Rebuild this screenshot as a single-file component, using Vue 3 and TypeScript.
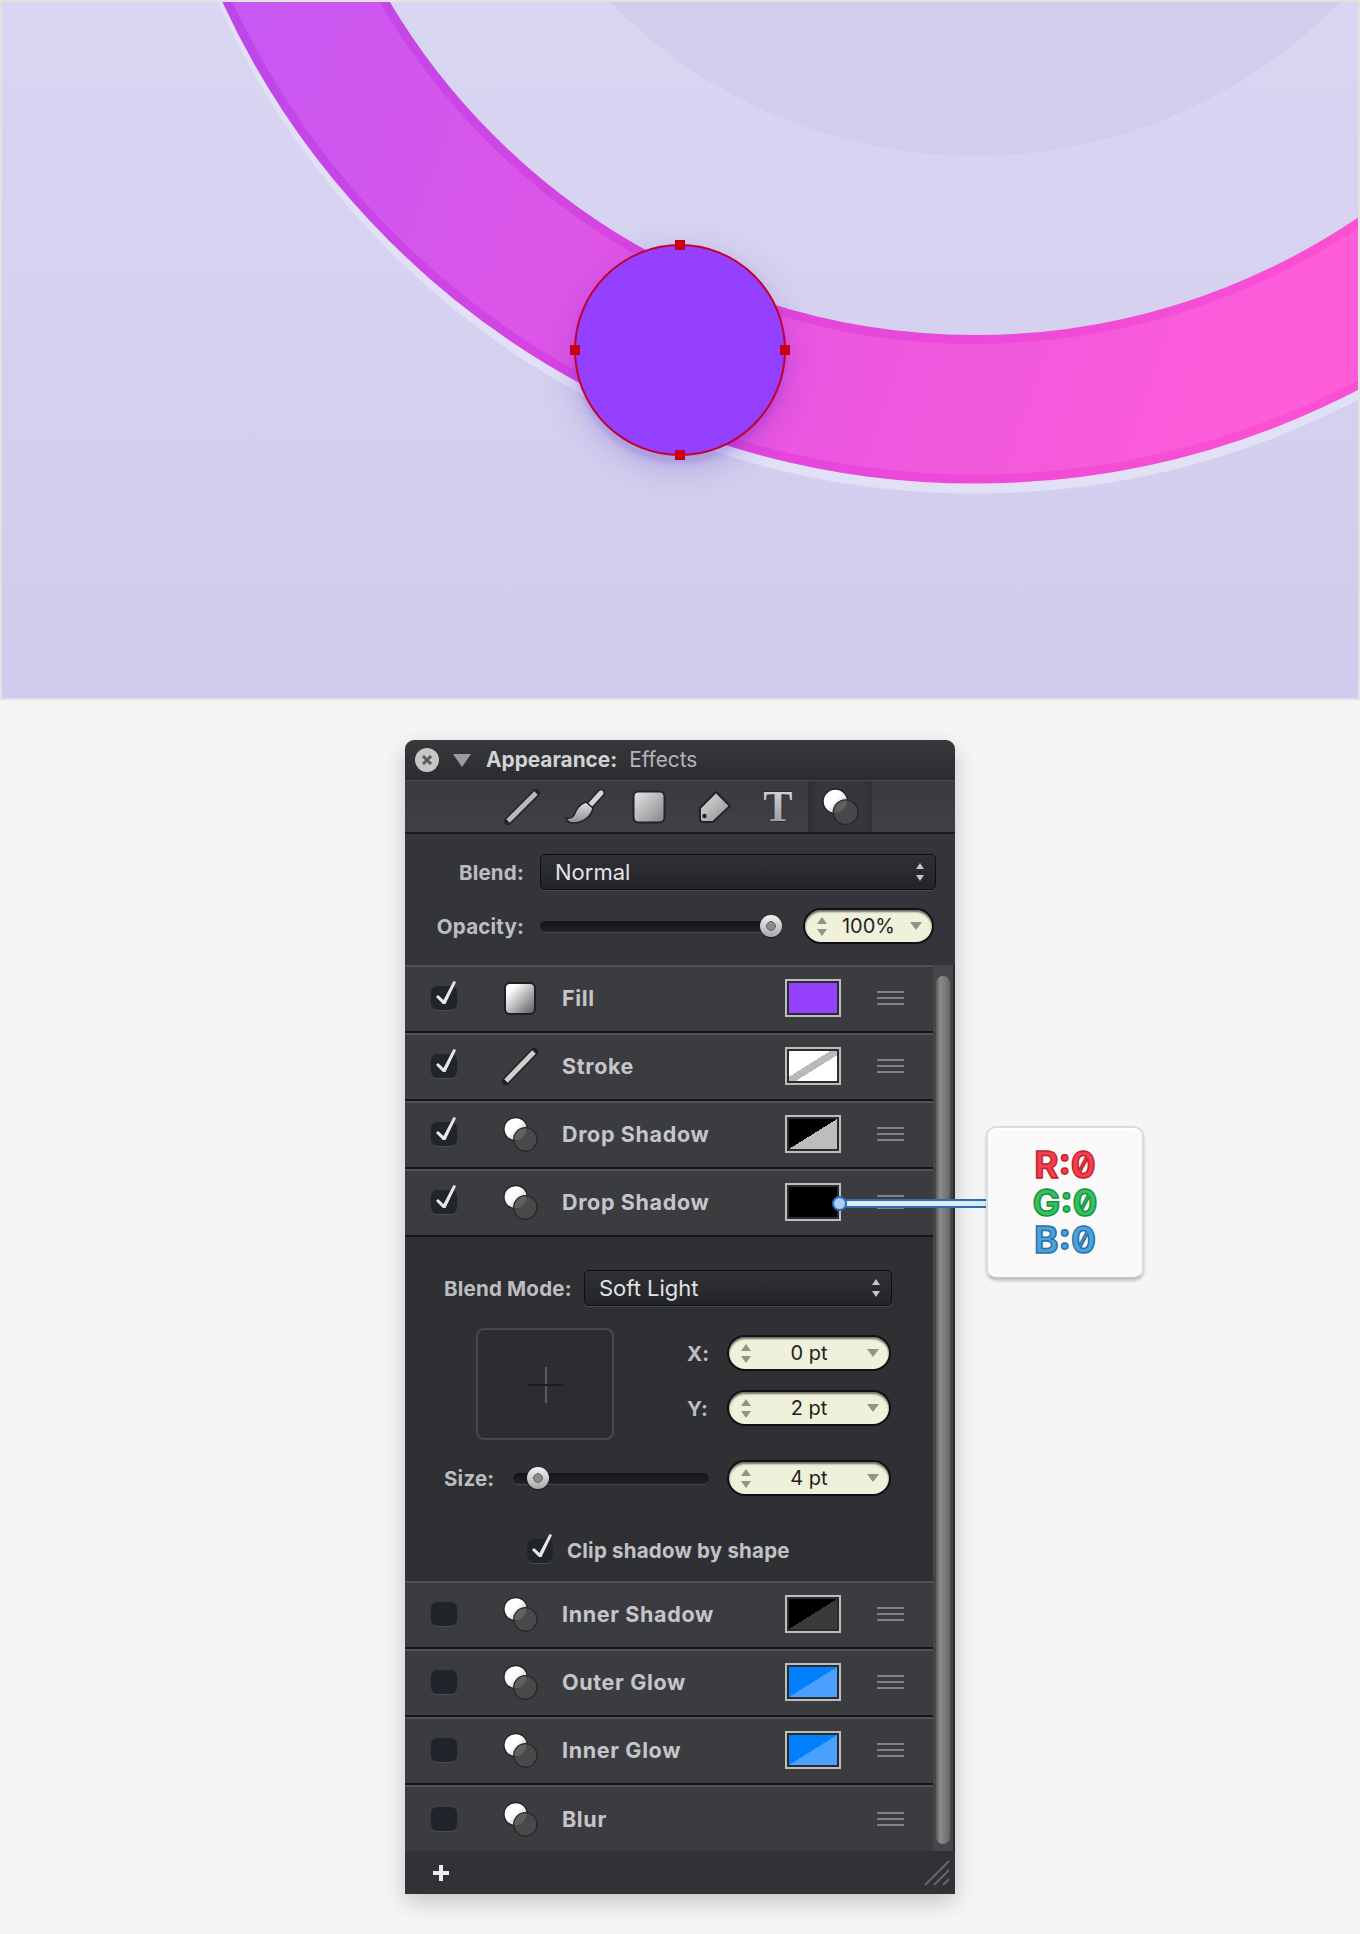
<script setup lang="ts">
interface EffectRow {
  name: string
  checked: boolean
  icon: 'fill' | 'line' | 'fx'
  swatch?: string
  expanded?: boolean
}

const rows: EffectRow[] = [
  { name: 'Fill', checked: true, icon: 'fill', swatch: 'sw-purple' },
  { name: 'Stroke', checked: true, icon: 'line', swatch: 'sw-stroke' },
  { name: 'Drop Shadow', checked: true, icon: 'fx', swatch: 'sw-gray' },
  { name: 'Drop Shadow', checked: true, icon: 'fx', swatch: 'sw-black', expanded: true },
  { name: 'Inner Shadow', checked: false, icon: 'fx', swatch: 'sw-dark' },
  { name: 'Outer Glow', checked: false, icon: 'fx', swatch: 'sw-blue' },
  { name: 'Inner Glow', checked: false, icon: 'fx', swatch: 'sw-blue' },
  { name: 'Blur', checked: false, icon: 'fx' }
]

const handles = [
  { x: 680, y: 245 },
  { x: 575, y: 350 },
  { x: 785, y: 350 },
  { x: 680, y: 455 }
]
</script>

<template>
  <div class="page">
    <!-- gradients shared by the small icons -->
    <svg class="defs" width="0" height="0">
      <defs>
        <linearGradient id="tool" x1="0" y1="0" x2="1" y2="1">
          <stop offset="0" stop-color="#e6e6e6" />
          <stop offset="1" stop-color="#85868a" />
        </linearGradient>
        <linearGradient id="toolV" x1="0" y1="0" x2="0" y2="1">
          <stop offset="0" stop-color="#e2e2e2" />
          <stop offset="1" stop-color="#8c8d90" />
        </linearGradient>
        <linearGradient id="ball" x1="0" y1="0" x2="1" y2="1">
          <stop offset="0.45" stop-color="#ffffff" />
          <stop offset="1" stop-color="#a0a0a0" />
        </linearGradient>
        <linearGradient id="box" x1="0" y1="0" x2="1" y2="1">
          <stop offset="0.2" stop-color="#ffffff" />
          <stop offset="1" stop-color="#55565a" />
        </linearGradient>
      </defs>
    </svg>

    <div class="canvas">
      <svg class="art" width="1356" height="696" viewBox="2 2 1356 696">
        <defs>
          <linearGradient id="ringDark" gradientUnits="userSpaceOnUse" x1="230" y1="0" x2="1300" y2="380">
            <stop offset="0" stop-color="#bc46ea" />
            <stop offset="0.5" stop-color="#df44de" />
            <stop offset="1" stop-color="#fb50d3" />
          </linearGradient>
          <linearGradient id="ringLight" gradientUnits="userSpaceOnUse" x1="230" y1="0" x2="1300" y2="380">
            <stop offset="0" stop-color="#c658f3" />
            <stop offset="0.5" stop-color="#e655e2" />
            <stop offset="1" stop-color="#ff5dd8" />
          </linearGradient>
        </defs>
        <circle cx="975" cy="-354" r="510" fill="#d2cdea" />
        <circle cx="975.4" cy="-336" r="755.25" fill="none" stroke="#e2e0f6" stroke-width="148.5" />
        <circle cx="975.4" cy="-346" r="755.25" fill="none" stroke="url(#ringDark)" stroke-width="148.5" />
        <circle cx="975.4" cy="-346" r="755.25" fill="none" stroke="url(#ringLight)" stroke-width="130.5" />
        <circle class="dot" cx="680" cy="350" r="105" fill="#9640ff" stroke="#c4002c" stroke-width="2" />
        <rect v-for="h in handles" :key="h.x + '-' + h.y" :x="h.x - 5" :y="h.y - 5" width="10" height="10" fill="#c90012" />
      </svg>
    </div>

    <div class="panel">
      <div class="titlebar">
        <span class="close">
          <svg width="12" height="12" viewBox="0 0 12 12">
            <path d="M2 2l8 8M10 2l-8 8" stroke="#5c5c5c" stroke-width="3" fill="none" />
          </svg>
        </span>
        <span class="disclosure"></span>
        <span class="title-strong">Appearance:</span>
        <span class="title-light">Effects</span>
      </div>

      <div class="toolbar">
        <svg class="tool tool-line" width="34" height="34" viewBox="0 0 34 34">
          <path d="M3 31L31 3" stroke="#222327" stroke-width="8" stroke-linecap="round" />
          <path d="M3 31L31 3" stroke="#b9b9bb" stroke-width="5" />
        </svg>
        <svg class="tool tool-brush" width="38" height="34" viewBox="0 0 38 34">
          <path d="M35 3L25 14" stroke="#222327" stroke-width="8" stroke-linecap="round" />
          <path d="M35 3L25 14" stroke="#d5d5d5" stroke-width="5" stroke-linecap="round" />
          <path d="M20 12l7 6c-2 9-10 15-20 15-3 0-6-2-7-5 5 1 8-2 9-5 2-6 6-9 11-11z" fill="url(#toolV)" stroke="#222327" stroke-width="1.6" />
        </svg>
        <svg class="tool tool-square" width="34" height="34" viewBox="0 0 34 34">
          <rect x="1.5" y="1.5" width="31" height="31" rx="5" fill="url(#tool)" stroke="#222327" stroke-width="2" />
        </svg>
        <svg class="tool tool-tag" width="34" height="34" viewBox="0 0 34 34">
          <path d="M18 2L32 16L15 32H5Q2 32 2 29V18Z" fill="url(#tool)" stroke="#222327" stroke-width="2" stroke-linejoin="round" />
          <circle cx="6.5" cy="26" r="2.2" fill="#222327" />
        </svg>
        <svg class="tool tool-t" width="32" height="34" viewBox="0 0 32 34">
          <text class="t-glyph" x="16" y="31" text-anchor="middle" fill="url(#toolV)" stroke="#222327" stroke-width="1.2">T</text>
        </svg>
        <div class="tool-active">
          <svg width="37" height="37" viewBox="0 0 36 36">
            <circle cx="13" cy="13" r="12" fill="url(#ball)" stroke="#222327" stroke-width="1.4" />
            <circle cx="23" cy="23.5" r="12" fill="#4c4c4c" fill-opacity="0.86" stroke="#26262a" stroke-width="1.3" />
          </svg>
        </div>
      </div>

      <div class="blend">
        <div class="blend-row">
          <span class="label blend-label">Blend:</span>
          <div class="select select-wide">
            <span>Normal</span>
            <span class="updown"><i class="up"></i><i class="down"></i></span>
          </div>
        </div>
        <div class="blend-row">
          <span class="label blend-label">Opacity:</span>
          <div class="slider slider-opacity"><span class="knob knob-end"></span></div>
          <div class="pill pill-pct">
            <span class="steps"><i class="up"></i><i class="down"></i></span>
            <span class="pill-value">100%</span>
            <span class="menu"><i class="down"></i></span>
          </div>
        </div>
      </div>

      <div class="body">
        <div class="list">
          <template v-for="(row, i) in rows" :key="i">
            <div class="row">
              <span class="check">
                <svg v-if="row.checked" class="tick" width="26" height="24" viewBox="0 0 26 24">
                  <polygon points="5,11 7,9 12.5,14 22.5,-5 25,-4 14.5,18 12,18" fill="#e8e8e8" />
                </svg>
              </span>
              <svg v-if="row.icon === 'fill'" class="row-icon" width="35" height="36" viewBox="0 0 35 36">
                <rect x="2" y="3" width="30" height="31" rx="5" fill="url(#box)" stroke="#1e1f22" stroke-width="2" />
              </svg>
              <svg v-else-if="row.icon === 'line'" class="row-icon" width="35" height="36" viewBox="0 0 35 36">
                <path d="M3 33L31 4" stroke="#1e1f22" stroke-width="8" stroke-linecap="round" />
                <path d="M3 33L31 4" stroke="#cfcfcf" stroke-width="5" />
              </svg>
              <svg v-else class="row-icon" width="35" height="36" viewBox="0 0 36 36">
                <circle cx="13" cy="13" r="12" fill="url(#ball)" stroke="#222327" stroke-width="1.4" />
                <circle cx="23" cy="23.5" r="12" fill="#4c4c4c" fill-opacity="0.86" stroke="#26262a" stroke-width="1.3" />
              </svg>
              <span class="row-name">{{ row.name }}</span>
              <span v-if="row.swatch" class="swatch"><span class="swatch-fill" :class="row.swatch"></span></span>
              <span class="grip"></span>
            </div>

            <div v-if="row.expanded" class="detail">
              <div class="detail-row">
                <span class="label mode-label">Blend Mode:</span>
                <div class="select select-mode">
                  <span>Soft Light</span>
                  <span class="updown"><i class="up"></i><i class="down"></i></span>
                </div>
              </div>

              <div class="offset">
                <div class="anchor"><span class="cross"></span></div>
                <div class="fields">
                  <div class="field">
                    <span class="label field-label">X:</span>
                    <div class="pill pill-pt">
                      <span class="steps"><i class="up"></i><i class="down"></i></span>
                      <span class="pill-value">0 pt</span>
                      <span class="menu"><i class="down"></i></span>
                    </div>
                  </div>
                  <div class="field">
                    <span class="label field-label">Y:</span>
                    <div class="pill pill-pt">
                      <span class="steps"><i class="up"></i><i class="down"></i></span>
                      <span class="pill-value">2 pt</span>
                      <span class="menu"><i class="down"></i></span>
                    </div>
                  </div>
                </div>
              </div>

              <div class="detail-row size-row">
                <span class="label size-label">Size:</span>
                <div class="slider slider-size"><span class="knob knob-start"></span></div>
                <div class="pill pill-pt">
                  <span class="steps"><i class="up"></i><i class="down"></i></span>
                  <span class="pill-value">4 pt</span>
                  <span class="menu"><i class="down"></i></span>
                </div>
              </div>

              <div class="clip">
                <span class="check">
                  <svg class="tick" width="26" height="24" viewBox="0 0 26 24">
                    <polygon points="5,11 7,9 12.5,14 22.5,-5 25,-4 14.5,18 12,18" fill="#e8e8e8" />
                  </svg>
                </span>
                <span class="clip-text">Clip shadow by shape</span>
              </div>
            </div>
          </template>
        </div>
        <div class="track"><div class="thumb"></div></div>
      </div>

      <div class="footer">
        <svg width="16" height="16" viewBox="0 0 16 16">
          <path d="M8 0v16M0 8h16" stroke="#ececf0" stroke-width="4" />
        </svg>
        <svg width="26" height="26" viewBox="0 0 26 26">
          <path d="M1 25L25 1M10 25L25 10M19 25l6-6" stroke="#66676b" stroke-width="2" />
        </svg>
      </div>

      <!-- callout over the last swatch -->
      <div class="connector"></div>
      <span class="connector-dot"></span>
      <div class="callout">
        <span class="rgb rgb-r">R:0</span>
        <span class="rgb rgb-g">G:0</span>
        <span class="rgb rgb-b">B:0</span>
      </div>
    </div>
  </div>
</template>

<style scoped>
.page {
  position: relative;
  height: 1934px;
  background: #f5f5f5;
  overflow: hidden;
  font-family: Inter, "Liberation Sans", sans-serif;
}
.defs { position: absolute; }

.canvas {
  height: 700px;
  box-sizing: border-box;
  border: 2px solid #e2e2e2;
  background: linear-gradient(#d9d6f2, #d0cbec);
}
.art { display: block; }
.dot {
  filter: drop-shadow(0 8px 2px rgba(70, 40, 190, 0.13)) drop-shadow(0 10px 16px rgba(70, 30, 190, 0.24));
}

.panel {
  position: relative;
  width: 550px;
  margin: 40px 0 0 405px;
  border-radius: 9px 9px 0 0;
  box-shadow: 0 8px 22px rgba(0, 0, 0, 0.2);
}

.titlebar {
  height: 40px;
  box-sizing: border-box;
  display: flex;
  align-items: center;
  padding: 0 0 2px 10px;
  background: linear-gradient(#37383c, #2b2c30);
  border-radius: 9px 9px 0 0;
  font-size: 20.8px;
}
.close {
  width: 24px;
  height: 24px;
  margin-top: 2px;
  border-radius: 50%;
  background: #c6c6c6;
  display: flex;
  align-items: center;
  justify-content: center;
}
.disclosure {
  width: 0;
  height: 0;
  margin: 2px 0 0 14px;
  border-left: 9px solid transparent;
  border-right: 9px solid transparent;
  border-top: 13px solid #9c9c9c;
}
.title-strong { margin-left: 15px; font-weight: 700; color: #d2d2d4; }
.title-light { margin-left: 12px; color: #b6b6b8; }

.toolbar {
  height: 54px;
  box-sizing: border-box;
  display: flex;
  align-items: center;
  padding-left: 100px;
  background: linear-gradient(#393a3f, #404147);
  border-top: 1px solid #4a4b50;
  border-bottom: 2px solid #191a1d;
}
.tool { flex: none; overflow: visible; }
.tool-brush { margin-left: 27px; }
.tool-square { margin-left: 28px; }
.tool-tag { margin-left: 32px; }
.tool-t { margin-left: 30px; }
.t-glyph { font-family: "Liberation Serif", serif; font-weight: 700; font-size: 44px; paint-order: stroke; }
.tool-active {
  width: 64px;
  height: 100%;
  margin-left: 14px;
  display: flex;
  align-items: center;
  justify-content: center;
  background: linear-gradient(90deg, #2f3034, #36373c 15%, #36373c 85%, #2f3034);
}

.label { font-size: 20.5px; font-weight: 700; color: #bdbdc0; letter-spacing: 0.2px; }

.blend {
  height: 131px;
  box-sizing: border-box;
  padding-top: 20px;
  background: #34353a;
  display: flex;
  flex-direction: column;
  gap: 18px;
}
.blend-row { display: flex; align-items: center; height: 36px; }
.blend-label { width: 119px; text-align: right; margin-right: 16px; }

.select {
  height: 36px;
  box-sizing: border-box;
  display: flex;
  align-items: center;
  justify-content: space-between;
  padding: 0 11px 0 14px;
  border: 1px solid #0f1012;
  border-radius: 5px;
  background: linear-gradient(#303136, #232428);
  box-shadow: 0 1px 0 #494a4f;
  font-size: 22px;
  color: #e2e3e6;
}
.select-wide { width: 396px; }
.select-mode { width: 308px; }
.updown { display: flex; flex-direction: column; gap: 6px; }
.updown .up { border-bottom-color: #c6c6c6; }
.updown .down { border-top-color: #c6c6c6; }

i.up, i.down {
  display: block;
  width: 0;
  height: 0;
  border-left: 4px solid transparent;
  border-right: 4px solid transparent;
}
i.up { border-bottom: 6px solid #92938a; }
i.down { border-top: 6px solid #92938a; }

.slider {
  position: relative;
  height: 11px;
  border-radius: 6px;
  background: linear-gradient(#131416, #212226);
  box-shadow: 0 1px 0 #45464b;
}
.slider-opacity { width: 238px; margin-right: 25px; }
.slider-size { width: 196px; margin-right: 18px; }
.knob {
  position: absolute;
  top: -6px;
  width: 22px;
  height: 22px;
  border-radius: 50%;
  background:
    radial-gradient(circle, #8a8a8a 3.5px, #5e5e5e 4.5px, transparent 5px),
    linear-gradient(#f2f2f2, #a8a8a8);
  box-shadow: 0 1px 1px rgba(0, 0, 0, 0.5);
}
.knob-end { left: 220px; }
.knob-start { left: 14px; }

.pill {
  height: 36px;
  box-sizing: border-box;
  display: grid;
  grid-template-columns: 33px 1fr 33px;
  align-items: center;
  text-align: center;
  border: 2px solid #101114;
  border-radius: 18px;
  background: #f0f1da;
  box-shadow: inset 0 2px 2px rgba(0, 0, 0, 0.55);
  color: #1f1f1f;
  font-size: 20px;
}
.pill-pct { width: 131px; }
.pill-pt { width: 164px; }
.steps { display: flex; flex-direction: column; align-items: center; gap: 5px; }
.steps i.up { border-left-width: 5px; border-right-width: 5px; border-bottom-width: 7px; }
.steps i.down { border-left-width: 5px; border-right-width: 5px; border-top-width: 7px; }
.menu { display: flex; justify-content: center; }
.menu i.down { border-left-width: 6px; border-right-width: 6px; border-top-width: 8px; }

.body { display: flex; }
.list { width: 528px; }
.track {
  width: 22px;
  box-sizing: border-box;
  padding: 11px 3px 7px;
  background: #454649;
  border-right: 2px solid #2a2b2e;
}
.thumb {
  height: 100%;
  border-radius: 9px;
  background: linear-gradient(90deg, #5c5c5e, #8c8c8c 30%, #777777 70%, #676767);
}

.row {
  height: 68px;
  box-sizing: border-box;
  display: flex;
  align-items: center;
  padding: 0 29px 3px 26px;
  background: #3b3c40;
  border-top: 2px solid #505156;
  border-bottom: 2px solid #15161a;
}
.row:last-child { height: 66px; border-bottom: 0; padding-bottom: 1px; }
.row .check { margin-right: 46px; }
.check {
  flex: none;
  width: 26px;
  height: 24px;
  border-radius: 6px;
  background: #22242b;
  box-shadow: 0 1px 0 #4a4b50;
}
.tick { display: block; overflow: visible; }
.row-icon { flex: none; overflow: visible; margin-right: 24px; }
.row-name { flex: 1; font-size: 21.5px; font-weight: 700; letter-spacing: 0.65px; color: #c6c6ca; }
.swatch {
  width: 56px;
  height: 38px;
  box-sizing: border-box;
  margin: 1px 36px 0 0;
  border: 2px solid #bcbcbc;
  padding: 2px;
  background: #2b2b2d;
}
.swatch-fill { display: block; height: 100%; }
.sw-purple { background: #9640ff; }
.sw-stroke { background: linear-gradient(to bottom right, #fff 43%, #b9b9b9 43% 57%, #fff 57%); }
.sw-gray { background: linear-gradient(to bottom right, #000 50%, #bdbdbd 50%); }
.sw-black { background: #000; }
.sw-dark { background: linear-gradient(to bottom right, #000 50%, #3a3a3a 50%); }
.sw-blue { background: linear-gradient(to bottom right, #0080ff 50%, #4a9fff 50%); }
.grip {
  width: 27px;
  height: 14px;
  background: repeating-linear-gradient(#808185 0 2px, transparent 2px 6px);
}

.detail {
  height: 344px;
  box-sizing: border-box;
  padding: 33px 0 0 39px;
  background: #2f3034;
}
.detail-row { display: flex; align-items: center; }
.mode-label { width: 140px; }
.offset { display: flex; margin: 22px 0 0 32px; }
.anchor {
  width: 138px;
  height: 112px;
  box-sizing: border-box;
  position: relative;
  border: 2px solid #48494d;
  border-radius: 8px;
  background: #2c2d31;
}
.cross {
  position: absolute;
  left: 50px;
  top: 37px;
  width: 36px;
  height: 36px;
  background:
    linear-gradient(#1c1d20, #1c1d20) center / 36px 2px no-repeat,
    linear-gradient(#5a5b5f, #5a5b5f) center / 2px 36px no-repeat;
}
.fields {
  margin: 7px 0 0 73px;
  display: flex;
  flex-direction: column;
  gap: 19px;
}
.field { display: flex; align-items: center; }
.field-label { width: 40px; }
.size-row { margin-top: 20px; }
.size-label { width: 69px; }
.clip { display: flex; align-items: center; margin: 42px 0 0 83px; }
.clip .check { margin-right: 14px; }
.clip-text { font-size: 20.5px; font-weight: 700; letter-spacing: 0.2px; color: #c2c2c6; }

.footer {
  height: 43px;
  box-sizing: border-box;
  display: flex;
  align-items: center;
  justify-content: space-between;
  padding: 0 5px 0 28px;
  background: #313236;
}

.connector {
  position: absolute;
  left: 434px;
  top: 459px;
  width: 148px;
  height: 9px;
  box-sizing: border-box;
  border-top: 2px solid #2b6eb0;
  border-bottom: 2px solid #2b6eb0;
  background: #dcebfb;
}
.connector-dot {
  position: absolute;
  left: 427px;
  top: 456px;
  width: 15px;
  height: 15px;
  box-sizing: border-box;
  border-radius: 50%;
  border: 2px solid #2b6eb0;
  background: #abcdf6;
}
.callout {
  position: absolute;
  left: 581px;
  top: 386px;
  width: 158px;
  height: 153px;
  box-sizing: border-box;
  display: flex;
  flex-direction: column;
  align-items: center;
  justify-content: center;
  border: 2px solid #dcdcdc;
  border-bottom-color: #c4c4c4;
  border-radius: 10px;
  background: #fafafa;
  box-shadow: 0 2px 3px rgba(0, 0, 0, 0.2), inset 0 2px 0 #fff;
}
.rgb {
  font-weight: 700;
  font-size: 37px;
  line-height: 37.5px;
  font-feature-settings: "zero" 1;
  -webkit-text-stroke-width: 1.5px;
}
.rgb-r { color: #f0404c; -webkit-text-stroke-color: #c8202e; }
.rgb-g { color: #34c05a; -webkit-text-stroke-color: #169442; }
.rgb-b { color: #4ba3dc; -webkit-text-stroke-color: #2a70aa; }
</style>
